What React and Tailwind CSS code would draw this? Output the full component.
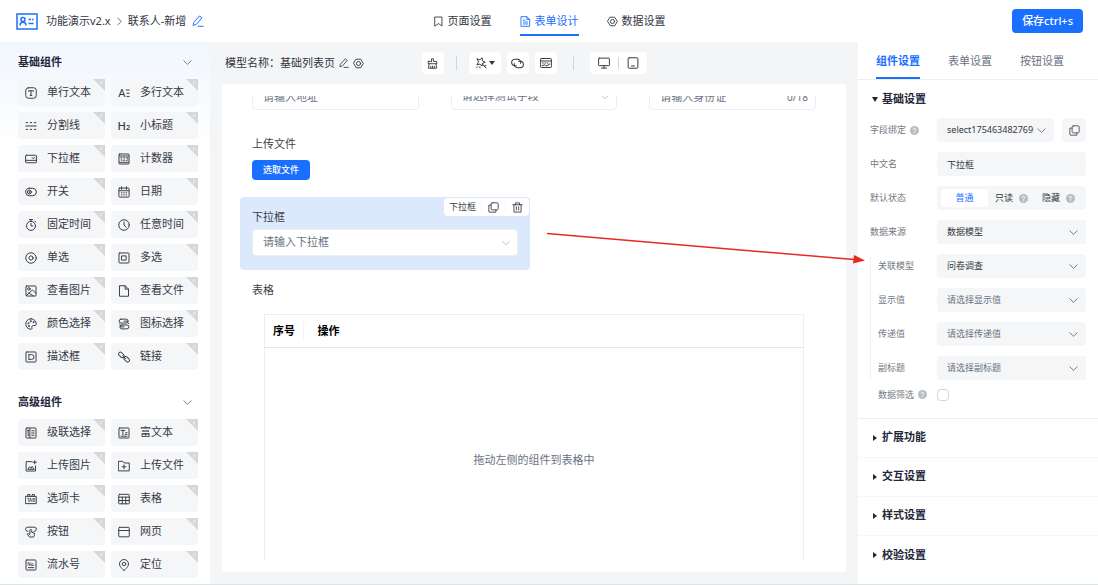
import React, { useState } from 'react';

const Svg = ({ size = 12, className = '', children }) => (
  <svg
    width={size}
    height={size}
    viewBox="0 0 16 16"
    fill="none"
    stroke="currentColor"
    strokeWidth="1.3"
    strokeLinecap="round"
    strokeLinejoin="round"
    className={`shrink-0 ${className}`}
    aria-hidden="true"
  >
    {children}
  </svg>
);

const Letters = ({ x = 8, y, size, weight = 600, children }) => (
  <text x={x} y={y} fontSize={size} fontWeight={weight} textAnchor="middle" fill="currentColor" stroke="none">
    {children}
  </text>
);

const frame = <rect x="1.3" y="1.3" width="13.4" height="13.4" rx="1" />;

const icons = {
  text: <><rect x="1" y="1" width="14" height="14" rx="3.5" /><path d="M4.8 5.8V5h6.4v.8M8 5v6.2M6.8 11.2h2.4" /></>,
  textarea: <><Letters x={5} y={13.5} size={15} weight={400}>A</Letters><path d="M11 4h4M12 8.300h3M12 12.600h3" /></>,
  divider: <><path d="M1 8h14" /><path d="M1.5 3.5h2M7 3.5h2M12.5 3.5h2M1.5 12.5h2M7 12.5h2M12.5 12.5h2" /></>,
  heading: <><Letters x={5} y={13.5} size={15} weight={500}>H</Letters><Letters x={13.500} y={13.500} size={10}>2</Letters></>,
  dropdown: <><rect x="0.8" y="3" width="14.4" height="10" rx="1" /><path d="M1 9.800h14M9.500 6l1.500 1.600L12.500 6" /></>,
  counter: <>{frame}<path d="M2 4h12M2 12.400h12" /><Letters y={10.600} size={6.5}>123</Letters></>,
  toggle: <><rect x="0.8" y="3" width="14.4" height="10" rx="5" /><circle cx="5.800" cy="8" r="2.600" /><path d="M5.800 7v2" /></>,
  date: <><rect x="1.2" y="2.8" width="13.6" height="12" rx="1" /><path d="M1.5 6.3h13M4.8 1v3.4M11.2 1v3.4M4.5 9h.8M7.6 9h.8M10.7 9h.8M4.5 11.8h.8M7.6 11.8h.8M10.7 11.8h.8" /></>,
  stopwatch: <><circle cx="8" cy="9.2" r="6" /><path d="M5.800 .8h4.400M8 .8v2.400M8 5.800v3.500h2.400M13 2.800l1.400 1.400" /></>,
  clock: <><circle cx="8" cy="8" r="7" /><path d="M8 4V8l2.800 3" /></>,
  radio: <><circle cx="8" cy="8" r="7" /><circle cx="8" cy="8" r="2.800" /></>,
  checkbox: <>{frame}<rect x="5.2" y="5.2" width="5.6" height="5.6" /></>,
  image: <>{frame}<circle cx="5.2" cy="5.2" r="1.7" /><path d="M2 14l8-7.500 4.500 4.500M5 10.500l6 4" /></>,
  file: <path d="M2.5 1h7l4.500 4.500V15H2.500zM9.500 1v4.500H14" />,
  palette: <><path d="M8 1a7 7 0 1 0 0 14c1.300 0 1.600-1 1.200-2-.6-1.700.3-3 2-3h2.100c1.100 0 1.700-.6 1.700-1.900A7 7 0 0 0 8 1z" /><circle cx="4.500" cy="7" r=".7" /><circle cx="7.500" cy="4.200" r=".7" /><circle cx="11.200" cy="5.500" r=".7" /><circle cx="5.100" cy="10.700" r=".7" /></>,
  iconPick: <><rect x="1.500" y="1.500" width="12" height="5.200" rx="2.600" /><rect x="2.500" y="9.300" width="12" height="5.200" rx="2.600" /><path d="M8 4.200h5M3 11.800h5M13 6l1 1.500M3 9.500L2 8" /></>,
  describe: <>{frame}<path d="M5.300 4.800h3.500a3.200 3.200 0 0 1 0 6.400H4.800l.5-2z" /></>,
  link: <><rect x="0.300" y="2.800" width="8.200" height="4.800" rx="2.400" transform="rotate(45 4.400 5.200)" /><rect x="7.500" y="8.700" width="8.200" height="4.800" rx="2.400" transform="rotate(45 11.600 11.100)" /><path d="M6.300 6.300l3.600 3.600" /></>,
  cascade: <>{frame}<path d="M6.500 1.700v12.600M3.300 4.500h1.700M4.200 4.500v7h1M9 5h3.300M9 8h3.300M9 11h3.300" /></>,
  richtext: <>{frame}<path d="M4 4.500h5M6.500 4.500v6M10.500 7.500H12M9.500 9.800H12M4 12.300h8" /></>,
  uploadImage: <><path d="M9.500 2.200H1.500v12.500h12.500V8" /><path d="M4 12l2-3 2 2 1.500-2.500L12 12zM13 .8v4.400M10.800 3h4.400" /></>,
  uploadFile: <><path d="M1 1.800h5.500L8.300 4H15v10.500H1z" /><path d="M8 6.500v5.200M5.500 9h5" /></>,
  tab: <><path d="M1 4.500h14v9.700H1zM3.500 4.500V2h3v2.500M9.500 4.500V2h3v2.500" /><Letters y={11.800} size={6}>TAB</Letters></>,
  table: <><rect x="1" y="1.800" width="14" height="12.600" rx="1" /><path d="M1.200 5.500h13.600M1.200 10h13.600M5.700 5.500v9M10.300 5.500v9" /></>,
  button: <><path d="M4 7H3.500a2.600 2.600 0 0 1 0-5.400h9a2.600 2.600 0 0 1 0 5.400H12" /><path d="M6.500 10.500V5.800a1.200 1.200 0 0 1 2.400 0v2.600l3.600 1v3l-1 2.300H6L2.800 10.800c1-1 2.400-.8 3.700.5" /></>,
  web: <><rect x="1" y="1.800" width="14" height="12.600" rx="1" /><path d="M1 6h14" /></>,
  serial: <>{frame}<Letters y={9} size={6}>No.</Letters><path d="M4.500 11.500h7" /></>,
  location: <><path d="M8 15.300S2 10.800 2 6.700a6 6 0 0 1 12 0C14 10.800 8 15.300 8 15.300z" /><circle cx="8" cy="6.700" r="2.300" /></>,
  bookmark: <path d="M3 1.500h10v13L8 11l-5 3.500z" />,
  doc: <><path d="M2 1h8l4 4v10H2zM10 1v4h4" /><path d="M5 6h2.300M5 8.800h6M5 11.600h6" /></>,
  hexagon: <><path d="M4.800 1.800h6.400L15 8l-3.800 6.200H4.800L1 8z" /><circle cx="8" cy="8" r="3" /></>,
  pencil: <path d="M2.500 9.800L10 1.300l3.200 2.600-7.500 8.600-3.700 1.300zM8 15h7" />,
  brush: <path d="M6.500 5V1.200h3V5h4.700v3.300H1.800V5zM3 8.300L2 14.800h12l-1-6.500M5.500 14.500V12M8 14.500V12M10.500 14.500V12" />,
  magic: <><path d="M3 2.500l3.500 1.300L9.500 1l.5 4 3.500 2-3.500 1.500L9.500 12 6.500 9.500 2.500 10.500 4.500 7z" /><path d="M9.800 9.500l5 5.200M3.500 13l-1.500 1.500M6.500 13v1.500M13 11.500h1.500" /></>,
  chain: <><path d="M6.500 10.800H4.800a4 4 0 0 1 0-8H8a4 4 0 0 1 3.900 5" /><path d="M9.500 5.200h1.700a4 4 0 0 1 0 8H8a4 4 0 0 1-3.900-5" /></>,
  keyboard: <><rect x="0.800" y="2" width="14.400" height="12" rx="1" /><path d="M1 5.300h14M3.500 8h1M6.500 8h1M9.500 8h1M3 11.500l3-1 3 1.300 4-2.500" /></>,
  monitor: <><rect x="0.800" y="1.500" width="14.400" height="10" rx="1" /><path d="M8 11.500V14.500M4.500 14.800h7" /></>,
  tablet: <><rect x="1.500" y="1" width="13" height="14" rx="1.500" /><path d="M6 12h4" /></>,
  copy: <><rect x="4.500" y="1.200" width="10.300" height="10.300" rx="1.800" /><path d="M11.500 11.500v3.300H2.800A1.500 1.500 0 0 1 1.200 13.200V4.500h3.300" /></>,
  trash: <path d="M1.200 4h13.600M5 4V1.300h6V4M2.800 4v10.700h10.400V4M6.300 7v4.700M9.700 7v4.700" />,
  down: <path d="M1.500 5L8 11.300 14.500 5" />,
  right: <path d="M5 2l6 6-6 6" />,
};

const Icon = ({ name, size, className }) => <Svg size={size} className={className}>{icons[name]}</Svg>;

const basicComponents = [
  ['text', '单行文本'], ['textarea', '多行文本'],
  ['divider', '分割线'], ['heading', '小标题'],
  ['dropdown', '下拉框'], ['counter', '计数器'],
  ['toggle', '开关'], ['date', '日期'],
  ['stopwatch', '固定时间'], ['clock', '任意时间'],
  ['radio', '单选'], ['checkbox', '多选'],
  ['image', '查看图片'], ['file', '查看文件'],
  ['palette', '颜色选择'], ['iconPick', '图标选择'],
  ['describe', '描述框'], ['link', '链接'],
];

const advancedComponents = [
  ['cascade', '级联选择'], ['richtext', '富文本'],
  ['uploadImage', '上传图片'], ['uploadFile', '上传文件'],
  ['tab', '选项卡'], ['table', '表格'],
  ['button', '按钮'], ['web', '网页'],
  ['serial', '流水号'], ['location', '定位'],
];

const Help = () => (
  <svg width="9" height="9" viewBox="0 0 16 16" className="shrink-0" aria-hidden="true">
    <circle cx="8" cy="8" r="8" fill="#b9bcc2" />
    <path d="M5.800 6.300a2.200 2.200 0 1 1 3.300 1.900c-.8.4-1.100.8-1.100 1.500M8 12v.4" fill="none" stroke="#fff" strokeWidth="1.500" strokeLinecap="round" />
  </svg>
);

const ComponentGroup = ({ title, items }) => (
  <section>
    <button type="button" className="flex w-full items-center justify-between pr-1.5 text-[11px] leading-4 font-bold text-[#23263a]">
      {title}
      <Icon name="down" size={9} className="text-gray-600" />
    </button>
    <div className="mt-[9px] grid grid-cols-2 gap-1.5">
      {items.map(([icon, label]) => (
        <button key={label} type="button" className="relative flex h-[27px] items-center gap-2.5 rounded-sm bg-[#f5f6f8] pl-[7px] text-[11px] text-[#373b45]">
          <Icon name={icon} size={12} />
          {label}
          <svg width="12" height="12" viewBox="0 0 12 12" className="absolute top-0 right-0" aria-hidden="true">
            <path d="M0 0h12v12z" fill="#d6d7d9" />
            <path d="M8.500 2.300l-1 3" stroke="#f5f6f8" strokeWidth="1" />
          </svg>
        </button>
      ))}
    </div>
  </section>
);

const Header = () => {
  const tabs = [['bookmark', '页面设置'], ['doc', '表单设计'], ['hexagon', '数据设置']];
  const [active, setActive] = useState('表单设计');

  return (
    <header className="grid h-[42px] shrink-0 grid-cols-[1fr_auto_1fr] items-center bg-white text-[11px] text-[#33363f]">
      <div className="flex items-center pl-4">
        <svg width="22" height="17" viewBox="0 0 22 17" fill="none" stroke="#1a6fff" strokeWidth="1.500" aria-hidden="true">
          <rect x="1" y="1" width="20" height="15" />
          <circle cx="7" cy="6.500" r="2" />
          <path d="M4 12.500c0-4.500 6-4.500 6 0M12.500 6.500h2.500M12.500 10.500h5M16 6.500h1.500" />
        </svg>
        <span className="ml-2">功能演示v2.x</span>
        <Icon name="right" size={9} className="mx-1" />
        <span>联系人-新增</span>
        <button type="button" aria-label="编辑" className="ml-1.5 text-[#1a6fff]"><Icon name="pencil" size={12} /></button>
      </div>
      <nav className="flex h-full items-end gap-7 pb-1.5">
        {tabs.map(([icon, label]) => (
          <button
            key={label}
            type="button"
            onClick={() => setActive(label)}
            className={`flex h-7 items-center gap-1 border-b-2 ${active === label ? 'border-[#1a6fff] text-[#1a6fff]' : 'border-transparent'}`}
          >
            <Icon name={icon} size={11} />
            {label}
          </button>
        ))}
      </nav>
      <div className="flex justify-end pr-[15px]">
        <button type="button" className="h-6 rounded-sm bg-[#1a6fff] px-2.5 text-[11px] font-medium text-white">保存ctrl+s</button>
      </div>
    </header>
  );
};

const toolButton = 'flex h-[22px] w-[22px] items-center justify-center rounded-sm bg-white';

const Toolbar = () => (
  <div className="grid h-[42px] shrink-0 grid-cols-[1fr_auto_1fr] items-center text-[#33363f]">
    <div className="flex items-center gap-1 pl-[15px] text-[11px] whitespace-nowrap">
      <span>模型名称：基础列表页</span>
      <button type="button" aria-label="重命名"><Icon name="pencil" size={10} /></button>
      <button type="button" aria-label="设置"><Icon name="hexagon" size={11} /></button>
    </div>
    <div className="flex items-center">
      <button type="button" aria-label="清空" className={toolButton}><Icon name="brush" size={11} /></button>
      <span className="mx-3 h-3.5 w-px bg-gray-300" />
      <button type="button" aria-label="智能" className="flex h-[22px] w-8 items-center justify-center gap-0.5 rounded-sm bg-white">
        <Icon name="magic" size={12} />
        <svg width="6" height="4" viewBox="0 0 6 4" aria-hidden="true"><path d="M0 0h6L3 4z" fill="currentColor" /></svg>
      </button>
      <button type="button" aria-label="关联" className={`ml-1.5 ${toolButton}`}><Icon name="chain" size={13} /></button>
      <button type="button" aria-label="快捷键" className={`ml-1.5 ${toolButton}`}><Icon name="keyboard" size={12} /></button>
      <span className="mx-4 h-3.5 w-px bg-gray-300" />
      <div className="flex h-[22px] items-center rounded-sm bg-white">
        <button type="button" aria-label="电脑" className="flex w-7 justify-center"><Icon name="monitor" size={12} /></button>
        <span className="h-3 w-px bg-gray-300" />
        <button type="button" aria-label="平板" className="flex w-7 justify-center"><Icon name="tablet" size={12} /></button>
      </div>
    </div>
  </div>
);

const fieldBox = 'block h-[27px] w-full appearance-none rounded-sm border border-[#eceef1] bg-white px-2.5 text-[11px] text-gray-500 placeholder:text-gray-500 outline-none';

const Canvas = () => (
  <div className="relative mx-3 mb-3 flex min-h-0 flex-1 flex-col rounded bg-white px-[18px] py-3">
    <div className="min-h-0 flex-1 overflow-hidden text-[11px] text-[#3b3f4a]">
      <div className="-mt-[13px] grid grid-cols-6 gap-x-2">
        <div className="col-span-2 px-3">
          <input aria-label="地址" placeholder="请输入地址" className={fieldBox} />
        </div>
        <div className="relative col-span-2 px-3">
          <select aria-label="测试字段" className={fieldBox}><option>请选择测试字段</option></select>
          <Icon name="down" size={8} className="pointer-events-none absolute top-2.5 right-5 text-gray-400" />
        </div>
        <div className="relative col-span-2 px-3">
          <input aria-label="身份证" placeholder="请输入身份证" className={fieldBox} />
          <span className="absolute top-1.5 right-5 text-[10px] leading-4 text-gray-500">0/18</span>
        </div>

        <div className="col-span-6 mt-[26px] px-3">
          <label htmlFor="upload" className="block leading-4">上传文件</label>
          <button id="upload" type="button" className="mt-2 block h-5 rounded-sm bg-[#1a6fff] px-[11px] text-[9px] font-medium text-white">选取文件</button>
        </div>

        <div className="relative col-span-3 mt-[17px] rounded bg-[#dce8fc] px-3 pt-3 pb-3.5">
          <label htmlFor="dropdown" className="block leading-4">下拉框</label>
          <div className="relative mt-1">
            <select id="dropdown" className={fieldBox}><option>请输入下拉框</option></select>
            <Icon name="down" size={8} className="pointer-events-none absolute top-2.5 right-2 text-gray-400" />
          </div>
          <div className="absolute top-px right-px flex h-[18px] items-center rounded-sm bg-white text-[9px]">
            <span className="px-[5px]">下拉框</span>
            <button type="button" aria-label="复制" className="flex w-6 justify-center border-l border-gray-100"><Icon name="copy" size={11} /></button>
            <button type="button" aria-label="删除" className="flex w-6 justify-center border-l border-gray-100"><Icon name="trash" size={11} /></button>
          </div>
        </div>

        <div className="col-span-6 mt-3 px-3">
          <p className="leading-4">表格</p>
          <div className="mt-4 px-3">
            <table className="w-full border border-[#eceef1]">
              <thead>
                <tr className="h-[33px] border-b border-[#e4e6ea] text-left text-black">
                  <th className="w-[39px] pl-2 font-bold"><span className="block border-r border-gray-100 leading-5">序号</span></th>
                  <th className="pl-3.5 font-bold">操作</th>
                </tr>
              </thead>
              <tbody>
                <tr><td colSpan="2" className="h-[226px] text-center text-gray-500">拖动左侧的组件到表格中</td></tr>
              </tbody>
            </table>
          </div>
        </div>
      </div>
    </div>
    {/* pointer from the selected field to its bound model */}
    <svg width="320" height="36" viewBox="0 0 320 36" className="absolute top-[147px] left-[325px] z-10" aria-hidden="true">
      <path d="M0 2.500L307 28.500" stroke="#e8281e" strokeWidth="1.500" />
      <path d="M307 24L318 29.500L306 32.500z" fill="#e8281e" />
    </svg>
  </div>
);

const panelBox = 'block h-6 w-full appearance-none rounded-sm bg-[#f4f6f7] pl-2.5 text-[9px] outline-none';

const Row = ({ id, label, help, nested, children }) => (
  <div className="flex items-center">
    <div className={`flex w-[67px] shrink-0 items-center gap-1 text-[9px] text-[#75797f] ${nested ? 'pl-2' : ''}`}>
      <label htmlFor={id} className="whitespace-nowrap">{label}</label>
      {help && <Help />}
    </div>
    <div className="flex min-w-0 flex-1 items-center">{children}</div>
  </div>
);

const PanelSelect = ({ id, value, muted }) => (
  <div className="relative min-w-0 flex-1">
    <select id={id} className={`${panelBox} pr-5 ${muted ? 'text-gray-500' : 'text-[#33363f]'}`}><option>{value}</option></select>
    <Icon name="down" size={9} className="pointer-events-none absolute top-2 right-2 text-gray-600" />
  </div>
);

const modelRows = [
  ['model', '关联模型', '问卷调查', false],
  ['display', '显示值', '请选择显示值', true],
  ['transfer', '传递值', '请选择传递值', true],
  ['subtitle', '副标题', '请选择副标题', true],
];

const SettingsPanel = () => {
  const [tab, setTab] = useState('组件设置');
  const [mode, setMode] = useState('普通');

  return (
    <aside className="w-60 shrink-0 bg-white">
      <nav className="flex h-[38px] gap-7 border-b border-[#eceef1] pl-[18px] text-[11px]">
        {['组件设置', '表单设置', '按钮设置'].map((name) => (
          <button
            key={name}
            type="button"
            onClick={() => setTab(name)}
            className={`border-b-2 pt-1 ${tab === name ? 'border-[#1a6fff] font-bold text-[#1a6fff]' : 'border-transparent text-gray-500'}`}
          >
            {name}
          </button>
        ))}
      </nav>
      <div className="border-b border-[#eceef1] pr-3 pb-4 pl-3">
        <button type="button" className="flex h-[38px] items-center gap-1 pl-0.5 text-[11px] font-bold text-[#23263a]">
          <svg width="6" height="5" viewBox="0 0 6 5" aria-hidden="true"><path d="M0 0h6L3 5z" fill="currentColor" /></svg>
          基础设置
        </button>
        <div className="flex flex-col gap-2.5">
          <Row id="field" label="字段绑定" help>
            <PanelSelect id="field" value="select1754634827695" />
            <button type="button" aria-label="复制字段" className="ml-2 flex h-6 w-6 items-center justify-center rounded-sm bg-[#f4f6f7] text-[#4b4f57]"><Icon name="copy" size={11} /></button>
          </Row>
          <Row id="cname" label="中文名">
            <input id="cname" defaultValue="下拉框" className={`${panelBox} text-[#33363f]`} />
          </Row>
          <Row label="默认状态">
            <div className="flex h-6 w-full items-center rounded-sm bg-[#f4f6f7] px-1 text-[9px] text-[#33363f]">
              {['普通', '只读', '隐藏'].map((name) => (
                <label
                  key={name}
                  className={`flex h-[18px] flex-1 items-center justify-center gap-1.5 rounded-sm whitespace-nowrap ${mode === name ? 'bg-white text-[#1a6fff]' : ''}`}
                >
                  <input type="radio" name="mode" className="sr-only" checked={mode === name} onChange={() => setMode(name)} />
                  {name}
                  {name !== '普通' && <Help />}
                </label>
              ))}
            </div>
          </Row>
          <Row id="source" label="数据来源"><PanelSelect id="source" value="数据模型" /></Row>
          <div className="flex flex-col gap-2.5 shadow-[inset_1px_0_0_#f1f2f4]">
            {modelRows.map(([id, label, value, muted]) => (
              <Row key={id} id={id} label={label} nested><PanelSelect id={id} value={value} muted={muted} /></Row>
            ))}
          </div>
        </div>
        <div className="mt-2">
          <Row id="filter" label="数据筛选" help nested>
            <input id="filter" type="checkbox" className="h-3 w-3 appearance-none rounded-sm border border-gray-300 bg-white checked:bg-[#1a6fff]" />
          </Row>
        </div>
      </div>
      {['扩展功能', '交互设置', '样式设置', '校验设置'].map((name) => (
        <button key={name} type="button" className="flex h-[39px] w-full items-center gap-1 border-b border-[#f5f6f7] pl-[15px] text-[11px] font-bold text-[#23263a] last:border-0">
          <svg width="5" height="6" viewBox="0 0 5 6" aria-hidden="true"><path d="M0 0v6l4-3z" fill="currentColor" /></svg>
          {name}
        </button>
      ))}
    </aside>
  );
};

const App = () => (
  <div className="flex h-screen flex-col overflow-hidden border-b border-[#dfe3e4] bg-[#f3f5f6] font-['Noto_Sans','Noto_Sans_CJK_SC',sans-serif]">
    <Header />
    <div className="flex min-h-0 flex-1">
      <aside className="flex w-[210px] shrink-0 flex-col gap-6 overflow-hidden bg-white bg-linear-to-b from-[#f1f6fe] to-white to-20% pt-3 pr-3 pl-[18px]">
        <ComponentGroup title="基础组件" items={basicComponents} />
        <ComponentGroup title="高级组件" items={advancedComponents} />
      </aside>
      <main className="flex min-w-0 flex-1 flex-col">
        <Toolbar />
        <Canvas />
      </main>
      <SettingsPanel />
    </div>
  </div>
);

export default App;
